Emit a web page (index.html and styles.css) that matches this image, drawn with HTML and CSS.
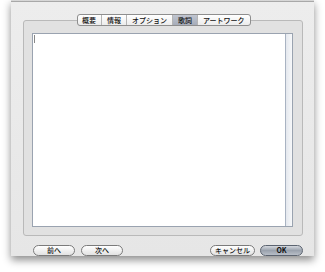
FILE: index.html
```html
<!DOCTYPE html>
<html lang="ja">
<head>
    <meta charset="UTF-8">
    <title>歌詞</title>
    <link rel="stylesheet" href="styles.css">
</head>
<body>

<div class="window">
    <div class="titlebar"></div>
    <div class="content">
        <div class="groupbox">
            <div class="tabs">
                <span class="tab">概要</span>
                <span class="tab">情報</span>
                <span class="tab">オプション</span>
                <span class="tab selected">歌詞</span>
                <span class="tab">アートワーク</span>
            </div>
            <div class="editor">
                <div class="text"><span class="caret"></span></div>
                <div class="scrolltrack"></div>
            </div>
        </div>
        <div class="buttons">
            <div class="left">
                <button class="btn">前へ</button>
                <button class="btn">次へ</button>
            </div>
            <div class="right">
                <button class="btn cancel">キャンセル</button>
                <button class="btn ok">OK</button>
            </div>
        </div>
    </div>
</div>

</body>
</html>
```

FILE: styles.css
```css
body {
    margin: 0;
    width: 325px;
    height: 272px;
    background-color: #ffffff;
    font-family: 'Noto Sans CJK JP', 'DejaVu Sans', sans-serif;
    overflow: hidden;
}
.window {
    margin-left: 11px;
    width: 303px;
    height: 256px;
    background-color: #e8e8e8;
    box-shadow: 0 4px 8px rgba(0, 0, 0, 0.45);
    display: flex;
    flex-direction: column;
}
.titlebar {
    height: 11px;
    background: linear-gradient(#dedede, #cfcfcf);
    border-bottom: 1px solid #a8a8a8;
}
.content {
    flex: 1;
    padding: 18px 11px 0 12px;
    display: flex;
    flex-direction: column;
    background: linear-gradient(#ededed, #e6e6e6);
}
.groupbox {
    position: relative;
    height: 194px;
    border: 1px solid #b9b9b9;
    border-radius: 3px;
    background-color: #e1e1e1;
    padding: 12px 9px 8px 8px;
    display: flex;
}
.tabs {
    position: absolute;
    top: -7px;
    left: 53px;
    display: flex;
    height: 10px;
    border: 1px solid #8e8e8e;
    border-radius: 3px;
    background: linear-gradient(#ffffff, #ececec);
    overflow: hidden;
}
.tab {
    font-size: 7px;
    font-weight: 500;
    line-height: 10px;
    color: #111;
    padding: 0 5px;
    border-left: 1px solid #b5b5b5;
}
.tab:first-child {
    border-left: none;
    padding-left: 4px;
}
.tab.selected {
    background: linear-gradient(#c0c5d0, #a6acb9);
}
.editor {
    flex: 1;
    display: flex;
    border: 1px solid #9aa3b0;
    background-color: #ffffff;
}
.text {
    flex: 1;
    padding: 1px 0 0 1px;
}
.caret {
    display: block;
    width: 1px;
    height: 8px;
    background-color: #888;
}
.scrolltrack {
    width: 6px;
    border-left: 1px solid #a9b3c2;
    background: linear-gradient(90deg, #e4e8ee, #f7f8fa);
}
.buttons {
    display: flex;
    justify-content: space-between;
    padding: 9px 0 0 10px;
}
.left, .right {
    display: flex;
    gap: 6px;
}
.right {
    gap: 5px;
}
.btn {
    width: 42px;
    height: 11px;
    padding: 0;
    border: 1px solid #7b7b7b;
    border-radius: 6px;
    background: linear-gradient(#ffffff, #e2e2e2);
    font-family: 'Noto Sans CJK JP', 'DejaVu Sans', sans-serif;
    font-size: 7px;
    font-weight: 500;
    line-height: 9px;
    color: #111;
}
.btn.cancel {
    width: 45px;
}
.btn.ok {
    width: 43px;
    font-weight: bold;
    border-color: #5c6470;
    background: linear-gradient(#d4d8de, #9aa2ad 50%, #b8bec7);
}
```
